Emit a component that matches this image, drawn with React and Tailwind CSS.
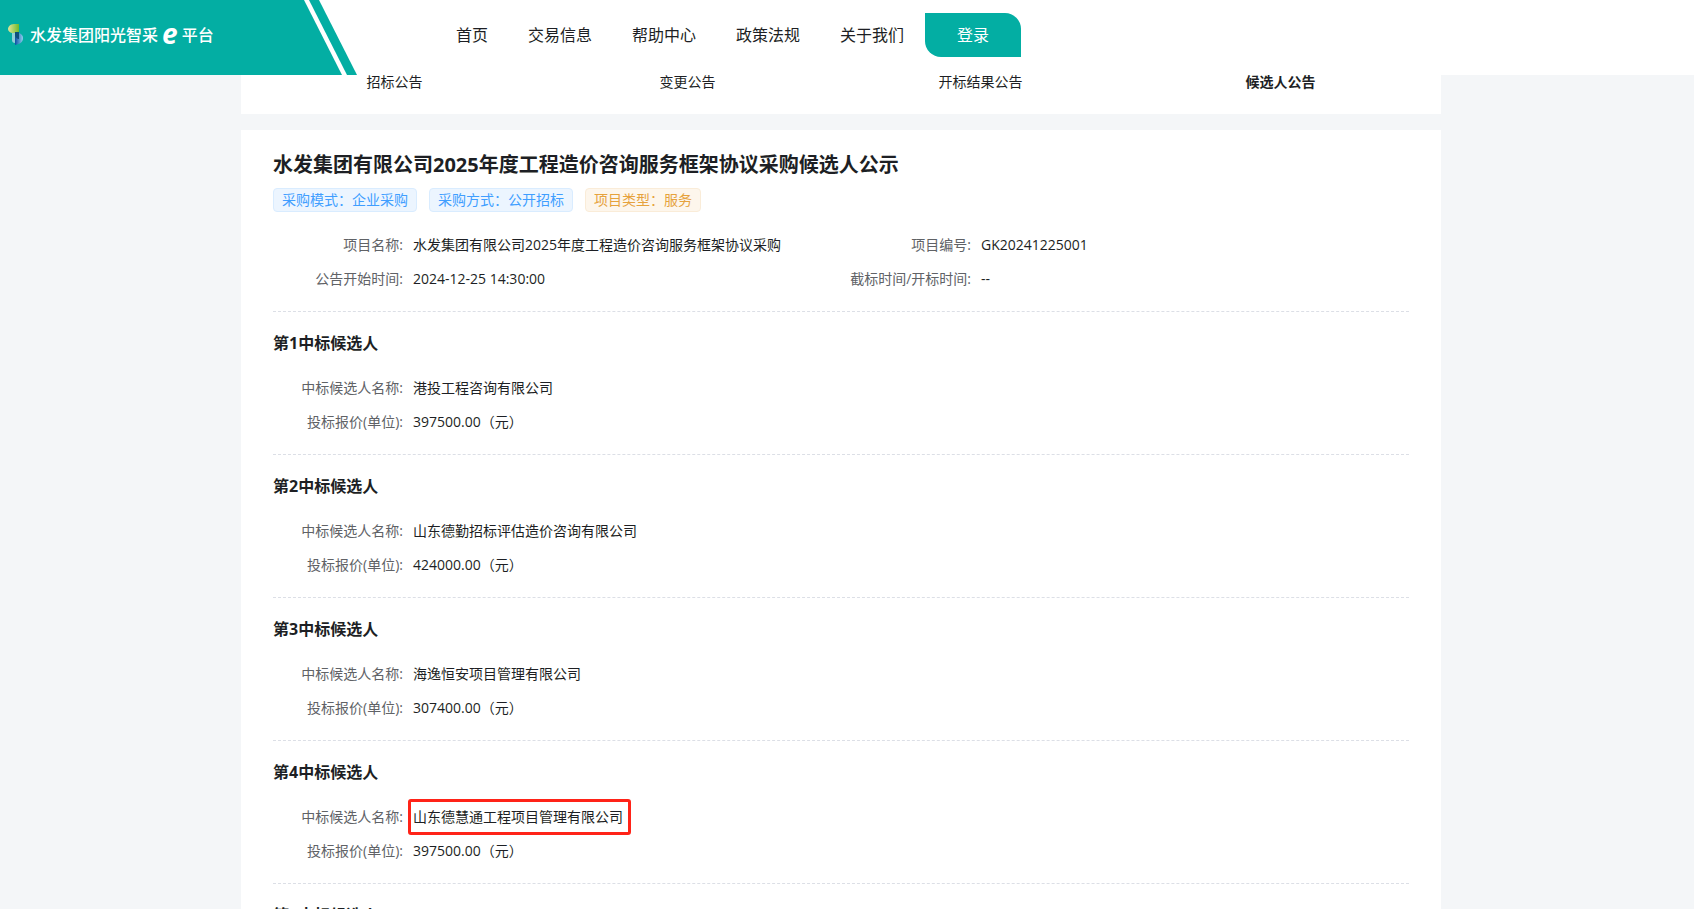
const navItems = ['首页', '交易信息', '帮助中心', '政策法规', '关于我们'];

const noticeTabs = ['招标公告', '变更公告', '开标结果公告', '候选人公告'];

const projectInfo = [
  { label: '项目名称:', value: '水发集团有限公司2025年度工程造价咨询服务框架协议采购' },
  { label: '项目编号:', value: 'GK20241225001' },
  { label: '公告开始时间:', value: '2024-12-25 14:30:00' },
  { label: '截标时间/开标时间:', value: '--' },
];

const candidates = [
  { name: '港投工程咨询有限公司', price: '397500.00' },
  { name: '山东德勤招标评估造价咨询有限公司', price: '424000.00' },
  { name: '海逸恒安项目管理有限公司', price: '307400.00' },
  { name: '山东德慧通工程项目管理有限公司', price: '397500.00', marked: true },
];

function Logo() {
  return (
    <svg viewBox="0 0 16 22" className="w-4 h-[22px]" aria-hidden="true">
      <defs>
        <linearGradient id="leaf" x1="0" y1="0" x2="1" y2="0">
          <stop offset="0" stopColor="#e3e79a" />
          <stop offset="1" stopColor="#6fb92c" />
        </linearGradient>
        <linearGradient id="drop" x1="0" y1="0" x2="1" y2="0">
          <stop offset="0" stopColor="#0b4ea2" />
          <stop offset="1" stopColor="#8fd0ee" />
        </linearGradient>
      </defs>
      <path d="M11 0v9H5C2 9 0 7 0 5s2-5 6-5z" fill="url(#leaf)" />
      <path d="M4 9h3v10c-2 0-3-1-3-3z" fill="#8fd0d8" />
      <path d="M7 9h4c3 1 4 3 4 5 0 4-3 6-8 7z" fill="url(#drop)" />
      <path d="M7 8h4v7c-2 0-4-2-4-4z" fill="#0d4f7c" />
    </svg>
  );
}

function Field({ label, value, marked }) {
  return (
    <div className="flex h-[34px] items-center text-sm">
      <dt className="w-[140px] shrink-0 pr-[10px] text-right text-[#606266]">{label}</dt>
      <dd className="relative whitespace-nowrap">
        {value}
        {marked && (
          <span className="absolute -top-2 -bottom-2 -left-[5px] -right-2 rounded-[3px] border-3 border-[#ff2318]" />
        )}
      </dd>
    </div>
  );
}

function Candidate({ index, name, price, marked }) {
  return (
    <section className="border-b border-dashed border-[#dcdfe6] pt-[19px] pb-[15px]">
      <h2 className="text-base font-bold">第{index}中标候选人</h2>
      <dl className="mt-4">
        <Field label="中标候选人名称:" value={name} marked={marked} />
        <Field label="投标报价(单位):" value={`${price}（元）`} />
      </dl>
    </section>
  );
}

export default function App() {
  return (
    <div className="h-screen overflow-hidden bg-[#f4f6f8] text-[#1d1f24] font-['Open_Sans','Noto_Sans_CJK_SC',sans-serif]">
      {/* Header */}
      <header className="flex h-[75px] bg-white">
        <div className="relative w-[357px] shrink-0">
          <div className="absolute inset-0 bg-[#03aea3] [clip-path:polygon(0_0,304px_0,342px_100%,0_100%)]" />
          <div className="absolute inset-0 bg-[#03aea3] [clip-path:polygon(309px_0,319px_0,357px_100%,347px_100%)]" />
          <a href="#" className="relative flex h-[70px] items-center pl-2 font-medium text-white">
            <Logo />
            <span className="ml-[6px]">水发集团阳光智采</span>
            <span className="mx-1 pb-1 text-[28px] font-bold italic">e</span>
            <span>平台</span>
          </a>
        </div>
        <nav className="ml-[99px] flex h-[70px] items-center gap-10">
          {navItems.map((item) => (
            <a key={item} href="#">{item}</a>
          ))}
        </nav>
        <button className="mt-[13px] ml-[21px] h-11 w-24 rounded-tr-2xl rounded-bl-2xl bg-[#03aea3] text-white">
          登录
        </button>
      </header>

      <div className="pr-3">
        <main className="mx-auto max-w-[1200px]">
          {/* Notice tabs */}
          <div className="grid grid-cols-[293fr_293fr_293fr_307fr] bg-white px-[7px] pb-[25px]">
            {noticeTabs.map((tab, i) => (
              <a key={tab} href="#" className={i === 3 ? 'text-center text-sm/[14px] font-bold' : 'text-center text-sm/[14px]'}>
                {tab}
              </a>
            ))}
          </div>

          {/* Notice detail */}
          <article className="mt-4 bg-white px-8 pt-[21px]">
            <h1 className="text-xl font-bold">水发集团有限公司2025年度工程造价咨询服务框架协议采购候选人公示</h1>
            <div className="mt-[9px] flex gap-3 text-sm/[22px]">
              <span className="rounded border border-[#d9ecff] bg-[#ecf5ff] px-2 text-[#409eff]">采购模式：企业采购</span>
              <span className="rounded border border-[#d9ecff] bg-[#ecf5ff] px-2 text-[#409eff]">采购方式：公开招标</span>
              <span className="rounded border border-[#faecd8] bg-[#fdf6ec] px-2 text-[#e6a23c]">项目类型：服务</span>
            </div>
            <dl className="mt-4 grid grid-cols-2 border-b border-dashed border-[#dcdfe6] pb-[15px]">
              {projectInfo.map((info) => (
                <Field key={info.label} {...info} />
              ))}
            </dl>

            {candidates.map((item, i) => (
              <Candidate key={item.name} index={i + 1} {...item} />
            ))}
            <h2 className="pt-[19px] text-base font-bold">第5中标候选人</h2>
          </article>
        </main>
      </div>
    </div>
  );
}
